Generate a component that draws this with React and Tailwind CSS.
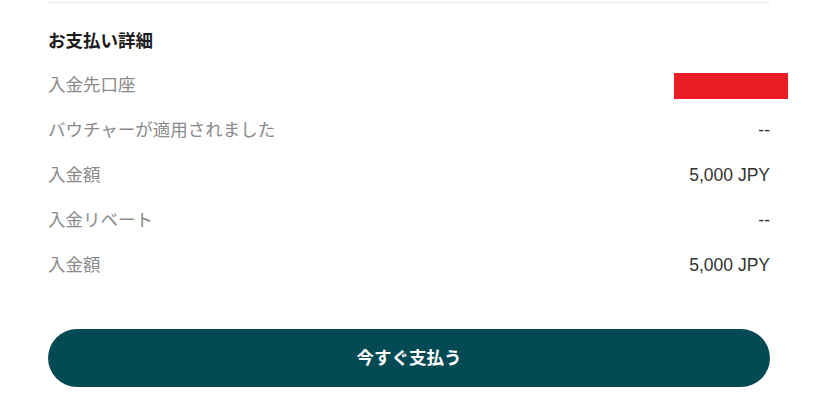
const rows = [
  { label: '入金先口座', value: null },
  { label: 'バウチャーが適用されました', value: '--' },
  { label: '入金額', value: '5,000 JPY' },
  { label: '入金リベート', value: '--' },
  { label: '入金額', value: '5,000 JPY' },
]

export default function App() {
  return (
    <div
      className="min-h-screen bg-white pl-[48px]"
      style={{ fontFamily: '"Liberation Sans", "Noto Sans CJK JP", sans-serif' }}
    >
      <div className="w-[722px]">
        <div className="mt-[2px] h-px bg-[#e9e9e9]" />

        <h2 className="pt-[26px] text-[17.5px] leading-[24px] font-bold text-[#1a1a1a]">お支払い詳細</h2>

        <div className="mt-[10px]">
          {rows.map((row, i) => (
            <div key={i} className="flex h-[45px] items-center justify-between">
              <span className="text-[17.5px] text-[#8a8a8a]">{row.label}</span>
              {row.value ? (
                <span className="text-[17.5px] text-[#333333]">{row.value}</span>
              ) : (
                <span className="mr-[-18px] h-[26px] w-[114px] bg-[#ec1c24]" />
              )}
            </div>
          ))}
        </div>

        <button
          type="button"
          className="mt-[41px] flex h-[58px] w-full items-center justify-center rounded-[29px] bg-[#044a55] text-[17.5px] font-bold text-white"
        >
          今すぐ支払う
        </button>
      </div>
    </div>
  )
}
